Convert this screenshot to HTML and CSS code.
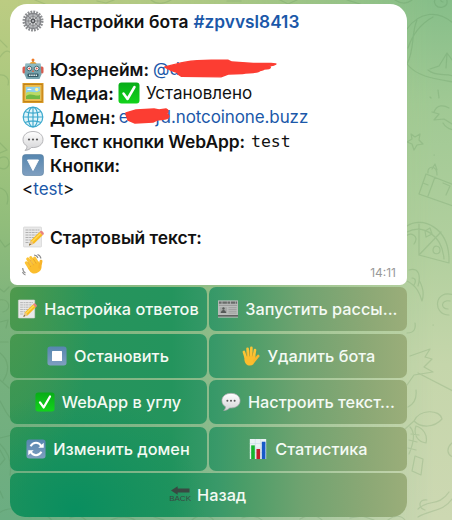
FILE: index.html
```html
<!DOCTYPE html>
<html lang="ru">
<head>
<meta charset="utf-8">
<title>Настройки бота</title>
<link rel="stylesheet" href="styles.css">
</head>
<body>
<svg class="defs" width="0" height="0" aria-hidden="true">
  <defs>
    <linearGradient id="blue" x2="0" y2="1"><stop stop-color="#5686af"/><stop offset="1" stop-color="#7f9fc0"/></linearGradient>
    <linearGradient id="green" x2="0" y2="1"><stop stop-color="#08ac18"/><stop offset="1" stop-color="#12d41b"/></linearGradient>
    <linearGradient id="bubble" x2="0" y2="1"><stop stop-color="#ffffff"/><stop offset="1" stop-color="#d3d3d5"/></linearGradient>
    <symbol id="check" viewBox="0 0 22 22"><rect x=".5" y=".5" width="21" height="21" rx="3" fill="url(#green)"/><path d="M5.500 11.500l4 5.500 7-12" fill="none" stroke="#fff" stroke-width="2.500" stroke-linecap="round" stroke-linejoin="round"/></symbol>
    <symbol id="speech" viewBox="0 0 22 22"><path d="M11 1.500C5 1.500 1 5 1 9.600c0 3 1.600 5.200 4 6.600 0 1.900-.8 3-2 4.200 3-.2 5.200-1.300 6.400-2.900 6.600.6 11.600-2.700 11.600-7.900 0-4.600-4-8.100-10-8.100z" fill="url(#bubble)" stroke="#a5a5a8" stroke-width=".8"/><g fill="#555"><circle cx="7" cy="9.500" r="1.100"/><circle cx="11" cy="9.500" r="1.100"/><circle cx="15" cy="9.500" r="1.100"/></g></symbol>
    <symbol id="memo" viewBox="0 0 22 22"><rect x="1.500" y="1" width="18" height="20" rx=".7" fill="#e9e9e9" stroke="#cfcfcf" stroke-width=".6"/><path d="M3.500 4h14M3.500 6.500h13M3.500 9h12M3.500 11.500h9M3.500 14h6M3.500 16.500h4" stroke="#a9a9a9" stroke-width=".9" stroke-dasharray="3 .7 2 .5"/><path d="M7 19.500l1.800-5L17.500 6l3.200 3.200-8.800 8.600z" fill="#f8bb20"/><path d="M9.500 16.200L18.800 7.200" stroke="#ffdb58" stroke-width="1.300"/><path d="M17.500 6l1-1c1-1 4.200 2 3.200 3.200l-1 1z" fill="#e9837d"/><path d="M7 19.500l1.800-5 3.100 3.300z" fill="#e6c290"/><path d="M7 19.500l.8-2 1.200 1.200z" fill="#444"/></symbol>
  </defs>
</svg>

<svg class="wallpaper" viewBox="0 0 452 520" aria-hidden="true">
  <g fill="none" stroke="#477b4a" stroke-opacity=".17" stroke-width="1.200" stroke-linecap="round" stroke-linejoin="round">
    <path d="M436-2c-4 5 1 11 7 9 6-2 5-9 0-9-3 0-3 4 0 4"/>
    <path d="M407 29c12-17 31-20 47-5M407 64c10 13 29 15 46 18M417 20c-6 13-2 29-10 44M433 17c-11 6-20 16-25 31M430 69l9-3 8-13 6 8M428 70c8 7 17 3 25 6M447 54l-1 14"/>
    <path d="M438 90l1 8M430 97l1 1M434 112c3-8 10-7 15-4M432 112l7 2-5 6 10-1 8 5"/>
    <path d="M411 134l4 3 5-3-1 6 4 4-6 1-3 5-2-6-5-2 5-3zM434 155h.5M443 123c3 5 6 6 10 7"/>
    <path d="M426 174l28 11M426 174l-7 20 34 12M435 177l-7 19M428 173c-1-8 9-8 9 2M432 169l3-5 2 6M423 183l5 2M443 183l7 3-4 9"/>
    <path d="M407 226c15-10 42 1 42 34v3l-30-8V224M407 232c15-8 35 2 37 27M419 255l22-23M406 236c5-4 14 0 8 8M425 231l5-3 2 6-6 3zM433 250c1-6 7-4 7 0 0 5-7 5-7 0z"/>
    <path d="M409 270c10-3 12 6 9 16M412 278c4 0 4 4 2 7M407 281c10 5 13 13 15 20 2-6 1-14-3-21M454 295c-20-7-22 20-5 20M450 301c-9-2-10 8-2 8M433 325h.5M407 333c7 0 9-4 8-10M453 342v10"/>
    <path d="M410 356l20-7-5 8 7 2-8 8 9 5-19 3-7 10M418 373l35 18M408 407c6-3 9-8 8-17"/>
    <path d="M414 421c5-12 26-12 28-2-8 9-21 9-28 2zM414 421l-9 8M416 426c7 2 12 9 10 17-8-1-13-8-10-17M410 427c7 7 2 20-1 27M411 434l8 1M409 440l8 2M408 448l8 2M415 456l8 3-2 16-9-4zM452 443c-6 5-5 12 1 14M418 509c10-10 21-2 31-17M418 517c14-8 25-5 34-18M427 500c-9-1-9 8-2 10"/>
    <path d="M-2 38l9 9M0 57c6-9 12-7 12 2M-1 75c6-1 11 3 9 10M0 143l7 7-7 3M0 158c12-6 12 15 0 10M0 188c8 2 9 10 7 16M0 240l5 7 7-5M0 289l4 3 5-5M-1 300c11-2 13 10 4 12M0 322l8-2-2 8M0 342h8M0 353c9 7 10 18 3 28M0 380l9 8M0 401c5 8 6 14 12 18M0 438l12-3M0 444c9 9 12 20 10 31M0 450l5 9-6 7M0 491l3 7M-1 513c10-7 24-5 30 4 14-6 20-1 24 5M70 518l9-3 7 5M111 520c8-4 20-4 25 1M154 517l10 3M192 520c7-7 19-5 22 1M242 518c8-3 16-2 21 3M300 519c8-5 17-4 22 1M350 518l12-2 12 4M388 520c6-5 13-5 17 0"/>
    <path d="M35 0l10 4M97 1l9 2 8-3M151 0c6 5 13 4 20 0M227 1h14M280 0l8 4 9-4M347 0l13 4M395 0c6 4 12 4 17 0"/>
  </g>
</svg>

<main class="chat">
  <article class="message">
    <div class="line">
      <svg class="emoji" viewBox="0 0 22 22"><circle cx="11" cy="11" r="9" fill="none" stroke="#8d8f92" stroke-width="3" stroke-dasharray="1.800 1.030"/><circle cx="11" cy="11" r="7.600" fill="#b4b6b9" stroke="#808286" stroke-width="1.400"/><circle cx="11" cy="11" r="4.500" fill="#d3d4d5" stroke="#8c8d8f"/><path d="M11 4v5M11 13v5M4 11h5M13 11h5M6 6l3 3M13 13l3 3M6 16l3-3M13 9l3-3" stroke="#85878a" stroke-width="1"/><circle cx="11" cy="11" r="2.400" fill="#55575b"/><circle cx="11" cy="11" r="1" fill="#c7c9cc"/></svg>
      <b class="title">Настройки бота</b><a class="tag">#zpvvsl8413</a>
    </div>
    <div class="line blank"></div>
    <div class="line">
      <svg class="emoji" viewBox="0 0 22 22"><path d="M11 2v4" stroke="#6b7b80" stroke-width="1.400"/><circle cx="11" cy="2" r="1.500" fill="#ef7b27"/><path d="M7.500 6c.5-3 6.500-3 7 0z" fill="#f5a52f"/><rect x=".5" y="8.500" width="4" height="7" rx="1.500" fill="#d85d50"/><rect x="17.500" y="8.500" width="4" height="7" rx="1.500" fill="#d85d50"/><path d="M3.500 5.500h15l1 11-2 4.500h-13l-2-4.500z" fill="#77a3ad"/><path d="M4 6h14l.5 3h-15z" fill="#8cb9c1"/><g fill="#fff" stroke="#436973"><circle cx="7.300" cy="10.500" r="2.300"/><circle cx="14.700" cy="10.500" r="2.300"/></g><circle cx="7.300" cy="10.500" r="1" fill="#d65a4c"/><circle cx="14.700" cy="10.500" r="1" fill="#d65a4c"/><path d="M11 11.500l1.200 2.500H9.800z" fill="#dc6b51"/><rect x="5.500" y="15.500" width="11" height="3.500" rx="1" fill="#355a66"/><path d="M7 17.200h8" stroke="#e4eeee" stroke-width="1.500" stroke-dasharray="1.500 .7"/></svg>
      <b class="user">Юзернейм:</b><a class="handle">@d</a>
      <svg class="scribble scribble-user" viewBox="0 0 126 24"><path d="M12 10c14-4 25-7 47-7h17l4 2 22 1.500c9 0 23-.5 23 .5s-3 1.500-11 2.500c7-.3 7 2-1 2.500-2 1-4 1.500-5 2-2 2-11 1.500-17 2.500L77 17l-8 3-40-.5-3-2-1-2-6-2z" fill="#fc3d32" stroke="#fc3d32" stroke-width="1.500" stroke-linejoin="round"/></svg>
    </div>
    <div class="line">
      <svg class="emoji" viewBox="0 0 22 22"><rect x=".5" y="1" width="21" height="20" fill="#d99a23"/><rect x="2" y="2.500" width="18" height="17" fill="#f2bd43" stroke="#b87919" stroke-width=".8"/><rect x="3.800" y="4.800" width="14.400" height="12.400" fill="#8fd1ed"/><path d="M4 11c4-3 8 1 14-2v8H4z" fill="#bcda65"/><path d="M4 14c6-4 9 1 14-1v4H4z" fill="#70b944"/><circle cx="14.700" cy="7.500" r="1.700" fill="#fff59b"/><path d="M5 8c2-2 3-1 5 0z" fill="#fff"/></svg>
      <b class="media">Медиа:</b><svg class="emoji status"><use href="#check"/></svg><span class="installed">Установлено</span>
    </div>
    <div class="line">
      <svg class="emoji" viewBox="0 0 22 22"><circle cx="11" cy="11" r="9.800" fill="#e2f5fa" stroke="#3eabcf" stroke-width="1.200"/><g fill="none" stroke="#3ba7cb" stroke-width="1.150"><ellipse cx="11" cy="11" rx="4.800" ry="9.800"/><path d="M11 1v20M1 11h20M2.800 5.500c5 2 11.400 2 16.400 0M2.800 16.500c5-2 11.400-2 16.400 0"/></g></svg>
      <b class="domain">Домен:</b><a class="host">e<span class="hidden">j</span>d.notcoinone.buzz</a>
      <svg class="scribble scribble-domain" viewBox="0 0 48 18"><path d="M3 6l10-3 18-1 5 1 7-1c3 1 2 4 0 5 4 1 4 4-1 5l-8 1-4 2-18 1-7-3-1-3z" fill="#fc3d32" stroke="#fc3d32" stroke-width="1.500" stroke-linejoin="round"/></svg>
    </div>
    <div class="line">
      <svg class="emoji"><use href="#speech"/></svg>
      <b class="label">Текст кнопки WebApp:</b><code>test</code>
    </div>
    <div class="line">
      <svg class="emoji" viewBox="0 0 22 22"><rect x=".5" y=".5" width="21" height="21" rx="3" fill="url(#blue)" stroke="#557da0" stroke-width=".6"/><path d="M5.500 6h11L11 16.500z" fill="#fff" stroke="#fff" stroke-linejoin="round"/></svg>
      <b class="buttons-label">Кнопки:</b>
    </div>
    <div class="line plain"><span>&lt;<a>test</a>&gt;</span></div>
    <div class="line blank"></div>
    <div class="line">
      <svg class="emoji"><use href="#memo"/></svg>
      <b class="start">Стартовый текст:</b>
    </div>
    <div class="line last">
      <svg class="emoji" viewBox="0 0 22 22"><g transform="rotate(-32 11 11)" stroke="#fcc435" fill="none" stroke-linecap="round" stroke-width="3"><path d="M6.500 12V5.500M9.700 11V3M13 11V3.500M16 12V6"/><path d="M5 10.500h12.500V15c0 3-2 5-6 5s-6.500-2.500-6.500-6z" fill="#fbbd2d" stroke="none"/><path d="M15.500 16.500l4.300-4.500" stroke="#f8b429"/><path d="M8.100 6v5M11.300 5v6M14.500 6v5" stroke="#df9620" stroke-width=".6"/></g><path d="M12 1c2 0 3 1 4 3M15.500 .5c2 .5 3 2 3.500 4M.7 14c0 2 1 4 2.800 5M.5 18c.5 1.500 1.500 2.500 3 3" stroke="#8b8b8b" fill="none" stroke-width="1.100"/></svg>
      <time>14:11</time>
    </div>
  </article>

  <nav class="keyboard">
    <button class="answers"><svg class="emoji"><use href="#memo"/></svg><span>Настройка ответов</span></button>
    <button class="mailing"><svg class="emoji" viewBox="0 0 22 22"><rect x="0" y="1.500" width="22" height="19" fill="#b9bcba"/><path d="M1 4h20" stroke="#686b69" stroke-width="2.500" stroke-dasharray="3 .8 5 .6"/><path d="M1 7h20" stroke="#888" stroke-width=".8"/><rect x="2" y="9" width="8" height="6.500" fill="#a5a8a6"/><path d="M11.500 9.500h9M11.500 11.500h9M11.500 13.500h9M11.500 15.500h9" stroke="#989b99" stroke-width=".9"/><path d="M0 18.500h22" stroke="#606361" stroke-width="1.800"/><circle cx="6" cy="10.500" r="1.300" fill="#555957"/><path d="M3 15.500c.5-4.500 5.500-4.500 6 0" fill="#555957"/></svg><span>Запустить рассы...</span></button>
    <button class="stop"><svg class="emoji" viewBox="0 0 22 22"><rect x=".5" y=".5" width="21" height="21" rx="3" fill="url(#blue)"/><rect x="5.500" y="5.500" width="11" height="11" rx=".6" fill="#fff"/></svg><span>Остановить</span></button>
    <button class="delete"><svg class="emoji" viewBox="0 0 22 22"><g stroke="#fcc435" fill="none" stroke-linecap="round" stroke-width="2.900"><path d="M6 12L4.300 6.500M9 11L8.300 3M12.300 11l.2-9M15.200 12l1.300-7.500"/><path d="M4.800 11.500L17 10.500l-.5 5.500c-.5 3.500-2.500 5.500-5.500 5.500-4 0-6-3-6.200-7z" fill="#fbbd2d" stroke="none"/><path d="M15.500 16.500l4.500-5.500" stroke="#f9b62a"/><path d="M7.500 7l.4 4M10.500 5v6M13.900 7l-.3 4" stroke="#df9620" stroke-width=".6"/></g></svg><span>Удалить бота</span></button>
    <button class="webapp"><svg class="emoji"><use href="#check"/></svg><span>WebApp в углу</span></button>
    <button class="text"><svg class="emoji"><use href="#speech"/></svg><span>Настроить текст...</span></button>
    <button class="change"><svg class="emoji" viewBox="0 0 22 22"><rect x=".5" y=".5" width="21" height="21" rx="3" fill="url(#blue)"/><path d="M5 8c3-5 9-5 12 0M17 14c-3 5-9 5-12 0" fill="none" stroke="#fff" stroke-width="2.200"/><path d="M13.500 9.500h6V4zM8.500 12.500h-6V18z" fill="#fff"/></svg><span>Изменить домен</span></button>
    <button class="stats"><svg class="emoji" viewBox="0 0 22 22"><rect x="2" y="0" width="18" height="22" fill="#e9f2f5"/><path d="M2 5h18M2 10h18M2 15h18M8 0v22M14 0v22" stroke="#c7dce5" stroke-width=".7"/><rect x="3.500" y="7" width="4" height="15" fill="#16b42e"/><rect x="9.300" y="11" width="4" height="11" fill="#c51e2b"/><rect x="15.200" y="3" width="4" height="19" fill="#1759c8"/></svg><span>Статистика</span></button>
    <button class="back"><span class="back-icon"><svg viewBox="0 0 20 9"><path d="M0 4.500L7 0v2.500h12.500v4H7V9z" fill="#394942"/></svg><i>BACK</i></span><span>Назад</span></button>
  </nav>
</main>
</body>
</html>
```
FILE: styles.css
```css
* { box-sizing: border-box; }

body {
  margin: 0;
  width: 452px;
  height: 520px;
  overflow: hidden;
  font-family: Inter, "Noto Sans", sans-serif;
  color: #111;
  background: linear-gradient(180deg, #bccc82 0%, #a9c87f 20%, #91bd7b 43%, #7bb27c 62%, #6bad82 100%);
}

body::before {
  content: "";
  position: absolute;
  inset: 0;
  background: linear-gradient(180deg, #86be89 0%, #a0c994 20%, #b3d09f 50%, #c5d6ab 70%, #cdd8b2 100%);
  mask-image: linear-gradient(90deg, transparent 3%, #0004 45%, #000 96%);
}

.defs, .wallpaper { position: absolute; }
.wallpaper { inset: 0; width: 452px; height: 520px; }

.chat { position: relative; padding: 4px 0 0 10px; }

.message {
  width: 397px;
  height: 281px;
  padding: 5px 12px 0;
  border-radius: 17px 17px 7px 7px;
  background: #fff;
}

.line {
  position: relative;
  display: flex;
  align-items: center;
  height: 24px;
  font-size: 17px;
  white-space: nowrap;
}

.emoji { width: 22px; height: 22px; flex: none; overflow: visible; }
.line > .emoji:first-child { margin-right: 6px; }
.line b, .line .tag { font-size: 17.4px; font-weight: 600; }
.line a { color: #1b58a9; }
.line .tag { margin-left: 5px; font-size: 17.3px; }
.line .label { letter-spacing: -0.1px; }
.handle, .host { margin-left: 4px; }
.line .host { margin-left: 3px; letter-spacing: -0.1px; }
.hidden { display: inline-block; width: 32px; padding-right: 1px; text-align: right; }
.status { margin-left: 4px; margin-right: 6px; }
.line code { margin-left: 6px; font: 16.5px "DejaVu Sans Mono", monospace; }
.last { height: 32px; }

.scribble { position: absolute; }
.scribble-user { left: 131px; top: 0; width: 124px; height: 24px; }
.scribble-domain { left: 101px; top: 2px; width: 48px; height: 18px; }

time {
  margin: 15px -1px 0 auto;
  color: #999;
  font-size: 12px;
}

.keyboard {
  display: grid;
  grid-template-columns: 197px 198px;
  grid-auto-rows: 44px;
  gap: 2.4px;
  margin-top: 2.4px;
}

.keyboard button {
  display: flex;
  align-items: center;
  justify-content: center;
  gap: 7px;
  padding: 0 1px 0 0;
  border: 0;
  border-radius: 7px;
  color: #f4faf4;
  font: 500 16.3px Inter, "Noto Sans", sans-serif;
  white-space: nowrap;
  background:
    radial-gradient(ellipse 130px 120px at 75px 510px, #098e5f, #098e5f00),
    radial-gradient(ellipse 90px 230px at 5px 275px, #529a4b, #529a4b00),
    linear-gradient(90deg, #29945b 0, #24945d 38%, #399969 48%, #4a9d68 54%, #70a370 67%, #8ba875 81%, #9cae7a 91%);
  background-attachment: fixed;
}

.keyboard .emoji { width: 20px; height: 20px; }
.keyboard .back { grid-column: 1 / -1; border-radius: 7px 7px 15px 15px; }
.back-icon { display: flex; flex-direction: column; align-items: center; width: 20px; }
.back-icon svg { width: 19px; height: 9px; }
.back-icon i { font: 400 8px/8px "Liberation Sans", sans-serif; color: #394942; }
```
